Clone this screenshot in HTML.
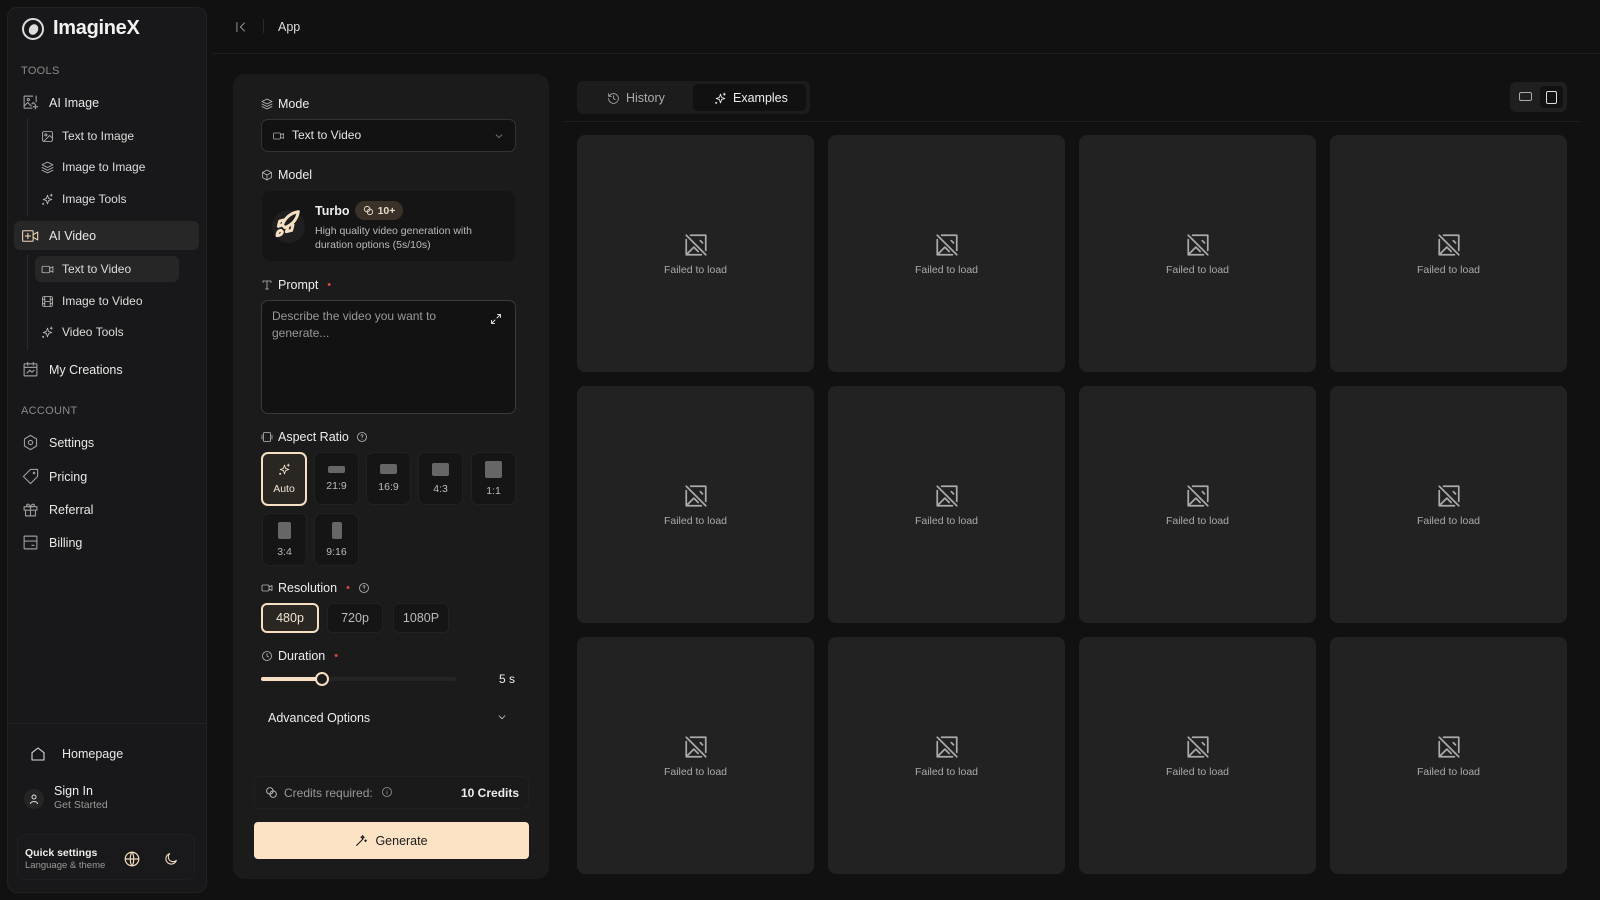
<!DOCTYPE html>
<html><head><meta charset="utf-8"><style>
*{box-sizing:border-box;margin:0;padding:0}
body{width:1600px;height:900px;background:#111111;font-family:"Liberation Sans",sans-serif;color:#e8e8e8;position:relative;overflow:hidden}
.a{position:absolute}
svg{display:block}
.ic{fill:none;stroke:currentColor;stroke-width:1.6;stroke-linecap:round;stroke-linejoin:round}
.side{left:7px;top:7px;width:200px;height:886px;background:#18181a;border:1px solid #222;border-radius:10px}
.lbl{font-size:11px;color:#8a8a8a;letter-spacing:.3px}
.nav{font-size:12.5px;color:#e8e8e8;display:flex;align-items:center;gap:10px}
.nav svg{color:#9a9a9a}
.sub{font-size:12px;color:#ddd;display:flex;align-items:center;gap:8px}
.sub svg{color:#bbb}
.panel{left:233px;top:74px;width:316px;height:805px;background:#1b1b1b;border-radius:12px}
.flab{font-size:12.5px;color:#eee;display:flex;align-items:center;gap:5px}
.flab svg{color:#bbb}
.req{color:#e0453a;font-size:11px;margin-left:4px}
.box{background:#121212;border:1px solid #333;border-radius:7px}
.rb{background:#151515;border:1px solid #222;border-radius:7px;width:45px;height:53px;display:flex;flex-direction:column;align-items:center;justify-content:center;gap:7px;font-size:10.5px;color:#bbb}
.rb i{display:block;background:#666;border-radius:2px}
.res{background:#151515;border:1px solid #222;border-radius:6px;height:30px;display:flex;align-items:center;justify-content:center;font-size:12px;color:#bbb}
.sel{border:2px solid #f6dfc2;background:#2a2622;color:#f2e4d2}
.card{width:237px;height:237px;background:#222222;border-radius:8px;display:flex;flex-direction:column;align-items:center;justify-content:center;gap:6px;font-size:10.5px;color:#aaa}
.card svg{color:#aaa}
</style></head><body>

<div class="a side"></div>
<div class="a" style="left:22px;top:18px;width:22px;height:22px;border-radius:50%;border:2px solid #ddd;display:flex;align-items:center;justify-content:center"><div style="width:9px;height:11px;background:#ddd;border-radius:50%;transform:rotate(30deg)"></div></div>
<div class="a" style="left:53px;top:17px;font-size:20px;font-weight:bold;color:#f2f2f2;letter-spacing:-0.3px">ImagineX</div>
<div class="a lbl" style="left:21px;top:65px">TOOLS</div>
<div class="a nav" style="left:22px;top:94px"><svg width="17" height="17" viewBox="0 0 24 24" class="ic"><path d="M15 3H4a1 1 0 0 0-1 1v16h11M3 17l5-5 5 5M14 14l2-2 2 2"/><circle cx="9" cy="8" r="1.5"/><path d="M19 15v6M16 18h6M20 3v8"/></svg><span>AI Image</span></div>
<div class="a" style="left:27px;top:118px;width:1px;height:98px;background:#2a2a2a"></div>
<div class="a sub" style="left:41px;top:129px"><svg width="13" height="13" viewBox="0 0 24 24" class="ic"><rect x="3" y="3" width="18" height="18" rx="2"/><circle cx="9" cy="9" r="2"/><path d="M21 15l-5-5L5 21"/></svg>Text to Image</div>
<div class="a sub" style="left:41px;top:160px"><svg width="13" height="13" viewBox="0 0 24 24" class="ic"><path d="M12 2l10 5-10 5L2 7z"/><path d="M2 12l10 5 10-5M2 17l10 5 10-5"/></svg>Image to Image</div>
<div class="a sub" style="left:41px;top:192px"><svg width="13" height="13" viewBox="0 0 24 24" class="ic"><path d="M12 4l2 6 6 2-6 2-2 6-2-6-6-2 6-2z"/><circle cx="4" cy="20" r="1"/><path d="M19 2v4M17 4h4"/></svg>Image Tools</div>
<div class="a" style="left:14px;top:221px;width:185px;height:29px;background:#272727;border-radius:6px"></div>
<div class="a nav" style="left:22px;top:229px"><svg width="17" height="14" viewBox="0 0 26 20" class="ic" style="color:#f3dcc0"><rect x="1" y="2" width="16" height="16" rx="1"/><path d="M9 6v8M5 10h8M17 8l7-4v12l-7-4"/></svg><span>AI Video</span></div>
<div class="a" style="left:35px;top:256px;width:144px;height:26px;background:#262626;border-radius:6px"></div>
<div class="a" style="left:27px;top:254px;width:1px;height:96px;background:#2a2a2a"></div>
<div class="a sub" style="left:41px;top:262px"><svg width="13" height="13" viewBox="0 0 24 24" class="ic"><rect x="2" y="6" width="14" height="12" rx="2"/><path d="M16 10l6-3v10l-6-3"/></svg>Text to Video</div>
<div class="a sub" style="left:41px;top:294px"><svg width="13" height="13" viewBox="0 0 24 24" class="ic"><rect x="3" y="3" width="18" height="18" rx="2"/><path d="M7 3v18M17 3v18M3 8h4M3 16h4M17 8h4M17 16h4M7 12h10"/></svg>Image to Video</div>
<div class="a sub" style="left:41px;top:325px"><svg width="13" height="13" viewBox="0 0 24 24" class="ic"><path d="M12 4l2 6 6 2-6 2-2 6-2-6-6-2 6-2z"/><circle cx="4" cy="20" r="1"/><path d="M19 2v4M17 4h4"/></svg>Video Tools</div>
<div class="a nav" style="left:22px;top:361px"><svg width="17" height="17" viewBox="0 0 24 24" class="ic"><rect x="3" y="4" width="18" height="17" rx="1"/><path d="M3 9h18M8 2v4M16 2v4M7 17l4-4 3 3 3-3"/></svg><span>My Creations</span></div>
<div class="a lbl" style="left:21px;top:405px">ACCOUNT</div>
<div class="a nav" style="left:22px;top:434px"><svg width="17" height="17" viewBox="0 0 24 24" class="ic"><path d="M12 2l8.5 5v10L12 22l-8.5-5V7z"/><circle cx="12" cy="12" r="3"/></svg><span>Settings</span></div>
<div class="a nav" style="left:22px;top:468px"><svg width="17" height="17" viewBox="0 0 24 24" class="ic"><path d="M12 2H22V12L12 22 2 12z"/><circle cx="17" cy="7" r="1"/></svg><span>Pricing</span></div>
<div class="a nav" style="left:22px;top:501px"><svg width="17" height="17" viewBox="0 0 24 24" class="ic"><rect x="3" y="8" width="18" height="5"/><path d="M5 13v8h14v-8M12 8v13M12 8c-2-5-7-4-5-1 1 1 5 1 5 1M12 8c2-5 7-4 5-1-1 1-5 1-5 1"/></svg><span>Referral</span></div>
<div class="a nav" style="left:22px;top:534px"><svg width="17" height="17" viewBox="0 0 24 24" class="ic"><rect x="3" y="3" width="18" height="18" rx="1"/><path d="M3 10h18M14 16h3"/></svg><span>Billing</span></div>
<div class="a" style="left:8px;top:723px;width:198px;height:1px;background:#222"></div>
<div class="a nav" style="left:30px;top:746px;gap:16px"><svg width="16" height="16" viewBox="0 0 24 24" class="ic" style="color:#ddd"><path d="M3 10l9-7 9 7v11H3z"/></svg><span>Homepage</span></div>
<div class="a" style="left:24px;top:789px;width:20px;height:20px;border-radius:50%;background:#252525;display:flex;align-items:center;justify-content:center"><svg width="12" height="12" viewBox="0 0 24 24" class="ic" style="color:#ddd;stroke-width:2"><circle cx="12" cy="8" r="4"/><path d="M5 21c1-5 13-5 14 0"/></svg></div>
<div class="a" style="left:54px;top:784px;font-size:12.5px;color:#eee">Sign In</div>
<div class="a" style="left:54px;top:799px;font-size:10.5px;color:#999">Get Started</div>
<div class="a" style="left:17px;top:834px;width:178px;height:46px;border:1px solid #202020;border-radius:8px;background:#19191b"></div>
<div class="a" style="left:25px;top:847px;font-size:10.5px;font-weight:bold;color:#eee">Quick settings</div>
<div class="a" style="left:25px;top:860px;font-size:9.5px;color:#999">Language &amp; theme</div>
<svg class="a ic" style="left:123px;top:850px;color:#f3dcc0" width="18" height="18" viewBox="0 0 24 24"><circle cx="12" cy="12" r="9"/><path d="M3 12h18M12 3c3 3 3 15 0 18M12 3c-3 3-3 15 0 18"/></svg>
<svg class="a ic" style="left:163px;top:851px;color:#f3dcc0" width="16" height="16" viewBox="0 0 24 24"><path d="M20 14A8 8 0 1 1 10 4a6 6 0 0 0 10 10z"/></svg>

<svg class="a ic" style="left:234px;top:20px;color:#999" width="14" height="14" viewBox="0 0 24 24"><path d="M5 4v16M18 5l-7 7 7 7"/></svg>
<div class="a" style="left:263px;top:19px;width:1px;height:14px;background:#2a2a2a"></div>
<div class="a" style="left:278px;top:20px;font-size:12.5px;color:#ddd">App</div>
<div class="a" style="left:213px;top:53px;width:1387px;height:1px;background:#1e1e1c"></div>

<div class="a panel"></div>
<div class="a flab" style="left:261px;top:97px"><svg width="12" height="12" viewBox="0 0 24 24" class="ic"><path d="M12 2l10 5-10 5L2 7z"/><path d="M2 12l10 5 10-5M2 17l10 5 10-5"/></svg>Mode</div>
<div class="a box" style="left:261px;top:119px;width:255px;height:33px"></div>
<svg class="a ic" style="left:272px;top:130px;color:#aaa" width="13" height="12" viewBox="0 0 24 24"><rect x="2" y="6" width="14" height="12" rx="2"/><path d="M16 10l6-3v10l-6-3"/></svg>
<div class="a" style="left:292px;top:128px;font-size:12px;color:#e5e5e5">Text to Video</div>
<svg class="a ic" style="left:494px;top:131px;color:#999" width="10" height="10" viewBox="0 0 24 24"><path d="M5 9l7 7 7-7"/></svg>
<div class="a flab" style="left:261px;top:168px"><svg width="12" height="12" viewBox="0 0 24 24" class="ic"><path d="M12 2l9 5v10l-9 5-9-5V7z"/><path d="M3 7l9 5 9-5M12 12v10"/></svg>Model</div>
<div class="a" style="left:262px;top:191px;width:253px;height:70px;background:#151515;border-radius:8px"></div>
<div class="a" style="left:272px;top:210px;width:33px;height:33px;border-radius:50%;background:#1f1f1f"></div>
<svg class="a ic" style="left:273px;top:209px;color:#f6dfc2;stroke-width:2.2" width="32" height="32" viewBox="0 0 24 24"><path d="M9 14l-2-2c2-5 6-9 12-10-1 6-5 10-10 12z"/><path d="M7 12l-3 1 1-4 4-1M11 14l-1 3 4-1 1-4"/><path d="M6 16c-2 0-3 2-3 4 2 0 4-1 4-3z"/></svg>
<div class="a" style="left:315px;top:204px;font-size:12.5px;font-weight:bold;color:#eee">Turbo</div>
<div class="a" style="left:355px;top:201px;width:48px;height:19px;border-radius:10px;background:#3a3128;font-size:10.5px;font-weight:bold;color:#eadbc8;display:flex;align-items:center;justify-content:center;gap:4px"><svg width="11" height="11" viewBox="0 0 24 24" class="ic" style="stroke-width:2"><circle cx="9" cy="9" r="6"/><circle cx="15" cy="15" r="6"/></svg>10+</div>
<div class="a" style="left:315px;top:224px;font-size:10.5px;color:#bbb;line-height:14px">High quality video generation with<br>duration options (5s/10s)</div>
<div class="a flab" style="left:261px;top:278px"><svg width="12" height="12" viewBox="0 0 24 24" class="ic"><path d="M4 7V4h16v3M12 4v16M9 20h6"/></svg>Prompt<span class="req">•</span></div>
<div class="a box" style="left:261px;top:300px;width:255px;height:114px;border-color:#3a3a3a"></div>
<div class="a" style="left:272px;top:308px;font-size:12px;color:#999;line-height:17px">Describe the video you want to<br>generate...</div>
<svg class="a ic" style="left:490px;top:313px;color:#ddd;stroke-width:2" width="12" height="12" viewBox="0 0 24 24"><path d="M14 10l7-7M15 3h6v6M10 14l-7 7M3 15v6h6"/></svg>
<div class="a flab" style="left:261px;top:430px"><svg width="12" height="12" viewBox="0 0 24 24" class="ic"><rect x="5" y="3" width="14" height="18" rx="2"/><path d="M2 8v8M22 8v8"/></svg>Aspect Ratio<svg width="12" height="12" viewBox="0 0 24 24" class="ic" style="margin-left:2px"><circle cx="12" cy="12" r="9"/><path d="M10 9a2 2 0 1 1 3 2c-1 .5-1 1-1 2M12 16.5v.1"/></svg></div>
<div class="a rb sel" style="left:261px;top:452px;height:54px;width:46px"><svg width="13" height="13" viewBox="0 0 24 24" class="ic"><path d="M12 4l2 6 6 2-6 2-2 6-2-6-6-2 6-2z"/><circle cx="4" cy="20" r="1"/><path d="M19 2v4M17 4h4"/></svg><span>Auto</span></div>
<div class="a rb" style="left:314px;top:452px"><i style="width:17px;height:7px"></i><span>21:9</span></div>
<div class="a rb" style="left:366px;top:452px"><i style="width:17px;height:10px"></i><span>16:9</span></div>
<div class="a rb" style="left:418px;top:452px"><i style="width:17px;height:13px"></i><span>4:3</span></div>
<div class="a rb" style="left:471px;top:452px"><i style="width:17px;height:17px"></i><span>1:1</span></div>
<div class="a rb" style="left:262px;top:513px"><i style="width:13px;height:17px"></i><span>3:4</span></div>
<div class="a rb" style="left:314px;top:513px"><i style="width:10px;height:17px"></i><span>9:16</span></div>
<div class="a flab" style="left:261px;top:581px"><svg width="12" height="12" viewBox="0 0 24 24" class="ic"><rect x="2" y="6" width="14" height="12" rx="2"/><path d="M16 10l6-3v10l-6-3"/></svg>Resolution<span class="req">•</span><svg width="12" height="12" viewBox="0 0 24 24" class="ic" style="margin-left:3px"><circle cx="12" cy="12" r="9"/><path d="M10 9a2 2 0 1 1 3 2c-1 .5-1 1-1 2M12 16.5v.1"/></svg></div>
<div class="a res sel" style="left:261px;top:603px;width:58px;font-size:12.5px">480p</div>
<div class="a res" style="left:327px;top:603px;width:56px;font-size:12.5px">720p</div>
<div class="a res" style="left:393px;top:603px;width:56px;font-size:12.5px">1080P</div>
<div class="a flab" style="left:261px;top:649px"><svg width="12" height="12" viewBox="0 0 24 24" class="ic"><circle cx="12" cy="12" r="9"/><path d="M12 7v5l3 2"/></svg>Duration<span class="req">•</span></div>
<div class="a" style="left:261px;top:677px;width:195px;height:4px;border-radius:2px;background:#252525"></div>
<div class="a" style="left:261px;top:677px;width:62px;height:4px;border-radius:2px;background:#f6dfc2"></div>
<div class="a" style="left:315px;top:672px;width:14px;height:14px;border-radius:50%;background:#1b1b1b;border:2px solid #f6dfc2"></div>
<div class="a" style="left:499px;top:672px;font-size:12px;color:#eee">5 s</div>
<div class="a" style="left:268px;top:711px;font-size:12.5px;color:#eee">Advanced Options</div>
<svg class="a ic" style="left:497px;top:712px;color:#ccc;stroke-width:2" width="10" height="10" viewBox="0 0 24 24"><path d="M5 9l7 7 7-7"/></svg>
<div class="a" style="left:254px;top:776px;width:275px;height:33px;border:1px solid #202020;border-radius:6px;background:#1a1a1a"></div>
<svg class="a ic" style="left:265px;top:786px;color:#ccc" width="13" height="13" viewBox="0 0 24 24"><circle cx="9" cy="9" r="6"/><circle cx="15" cy="15" r="6"/></svg>
<div class="a" style="left:284px;top:786px;font-size:12px;color:#999">Credits required:</div>
<svg class="a ic" style="left:381px;top:786px;color:#999" width="12" height="12" viewBox="0 0 24 24"><circle cx="12" cy="12" r="9"/><path d="M12 11v5M12 8v.1"/></svg>
<div class="a" style="left:461px;top:786px;font-size:12px;font-weight:bold;color:#eee">10 Credits</div>
<div class="a" style="left:254px;top:822px;width:275px;height:37px;border-radius:4px;background:#fde3c5;display:flex;align-items:center;justify-content:center;gap:7px;font-size:12.5px;color:#1a1a1a"><svg width="13" height="13" viewBox="0 0 24 24" class="ic" style="stroke-width:2"><path d="M3 21L15 9M13 5l1-2 1 2 2 1-2 1-1 2-1-2-2-1zM19 12l.5-1 .5 1 1 .5-1 .5-.5 1-.5-1-1-.5z"/></svg>Generate</div>

<div class="a" style="left:577px;top:81px;width:233px;height:33px;border-radius:6px;background:#1c1c1c"></div>
<div class="a" style="left:693px;top:84px;width:113px;height:27px;border-radius:5px;background:#111"></div>
<div class="a" style="left:607px;top:91px;font-size:12.5px;color:#aaa;display:flex;gap:6px;align-items:center"><svg width="13" height="13" viewBox="0 0 24 24" class="ic"><path d="M3 12a9 9 0 1 0 3-6.7L3 8M3 3v5h5M12 7v5l3 2"/></svg>History</div>
<div class="a" style="left:714px;top:91px;font-size:12.5px;color:#eee;display:flex;gap:6px;align-items:center"><svg width="13" height="13" viewBox="0 0 24 24" class="ic"><path d="M12 4l2 6 6 2-6 2-2 6-2-6-6-2 6-2z"/><circle cx="4" cy="20" r="1"/><path d="M19 2v4M17 4h4"/></svg>Examples</div>
<div class="a" style="left:1510px;top:82px;width:57px;height:30px;border-radius:6px;background:#1f1f1f"></div>
<div class="a" style="left:1540px;top:86px;width:23px;height:22px;border-radius:4px;background:#111"></div>
<div class="a" style="left:1519px;top:92px;width:13px;height:9px;border:1.5px solid #aaa;border-radius:2px"></div>
<div class="a" style="left:1546px;top:91px;width:11px;height:13px;border:1.5px solid #ddd;border-radius:2px"></div>
<div class="a" style="left:563px;top:121px;width:1017px;height:1px;background:#1f1e1b"></div>

<div class="a" style="left:577px;top:135px;display:grid;grid-template-columns:repeat(4,237px);grid-template-rows:repeat(3,237px);column-gap:14px;row-gap:14px">
<div class="card"><svg width="26" height="26" viewBox="0 0 24 24" class="ic"><path d="M3 3l18 18M7 3h14v14M3 7v14h14M3 21l7-7 4 4M16 8l2 2"/></svg>Failed to load</div>
<div class="card"><svg width="26" height="26" viewBox="0 0 24 24" class="ic"><path d="M3 3l18 18M7 3h14v14M3 7v14h14M3 21l7-7 4 4M16 8l2 2"/></svg>Failed to load</div>
<div class="card"><svg width="26" height="26" viewBox="0 0 24 24" class="ic"><path d="M3 3l18 18M7 3h14v14M3 7v14h14M3 21l7-7 4 4M16 8l2 2"/></svg>Failed to load</div>
<div class="card"><svg width="26" height="26" viewBox="0 0 24 24" class="ic"><path d="M3 3l18 18M7 3h14v14M3 7v14h14M3 21l7-7 4 4M16 8l2 2"/></svg>Failed to load</div>
<div class="card"><svg width="26" height="26" viewBox="0 0 24 24" class="ic"><path d="M3 3l18 18M7 3h14v14M3 7v14h14M3 21l7-7 4 4M16 8l2 2"/></svg>Failed to load</div>
<div class="card"><svg width="26" height="26" viewBox="0 0 24 24" class="ic"><path d="M3 3l18 18M7 3h14v14M3 7v14h14M3 21l7-7 4 4M16 8l2 2"/></svg>Failed to load</div>
<div class="card"><svg width="26" height="26" viewBox="0 0 24 24" class="ic"><path d="M3 3l18 18M7 3h14v14M3 7v14h14M3 21l7-7 4 4M16 8l2 2"/></svg>Failed to load</div>
<div class="card"><svg width="26" height="26" viewBox="0 0 24 24" class="ic"><path d="M3 3l18 18M7 3h14v14M3 7v14h14M3 21l7-7 4 4M16 8l2 2"/></svg>Failed to load</div>
<div class="card"><svg width="26" height="26" viewBox="0 0 24 24" class="ic"><path d="M3 3l18 18M7 3h14v14M3 7v14h14M3 21l7-7 4 4M16 8l2 2"/></svg>Failed to load</div>
<div class="card"><svg width="26" height="26" viewBox="0 0 24 24" class="ic"><path d="M3 3l18 18M7 3h14v14M3 7v14h14M3 21l7-7 4 4M16 8l2 2"/></svg>Failed to load</div>
<div class="card"><svg width="26" height="26" viewBox="0 0 24 24" class="ic"><path d="M3 3l18 18M7 3h14v14M3 7v14h14M3 21l7-7 4 4M16 8l2 2"/></svg>Failed to load</div>
<div class="card"><svg width="26" height="26" viewBox="0 0 24 24" class="ic"><path d="M3 3l18 18M7 3h14v14M3 7v14h14M3 21l7-7 4 4M16 8l2 2"/></svg>Failed to load</div>
</div>
</body></html>
